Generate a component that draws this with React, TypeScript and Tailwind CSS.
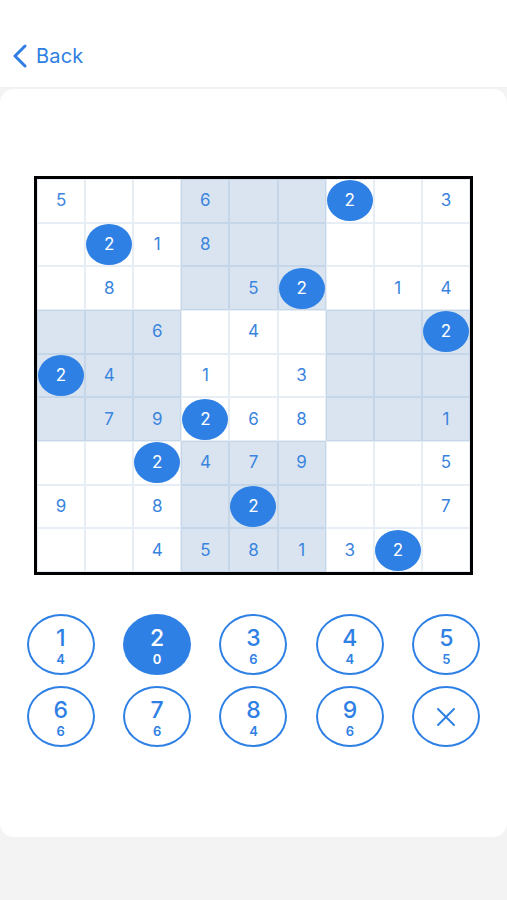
import React from "react";

const BOARD: (number | null)[][] = [
  [5, null, null, 6, null, null, 2, null, 3],
  [null, 2, 1, 8, null, null, null, null, null],
  [null, 8, null, null, 5, 2, null, 1, 4],
  [null, null, 6, null, 4, null, null, null, 2],
  [2, 4, null, 1, null, 3, null, null, null],
  [null, 7, 9, 2, 6, 8, null, null, 1],
  [null, null, 2, 4, 7, 9, null, null, 5],
  [9, null, 8, null, 2, null, null, null, 7],
  [null, null, 4, 5, 8, 1, 3, 2, null],
];

function shaded(r: number, c: number) {
  const br = Math.floor(r / 3);
  const bc = Math.floor(c / 3);
  return (br + bc) % 2 === 1;
}

const PAD: { d: string; n?: string; active?: boolean }[] = [
  { d: "1", n: "4" },
  { d: "2", n: "0", active: true },
  { d: "3", n: "6" },
  { d: "4", n: "4" },
  { d: "5", n: "5" },
  { d: "6", n: "6" },
  { d: "7", n: "6" },
  { d: "8", n: "4" },
  { d: "9", n: "6" },
  { d: "x" },
];

export default function App() {
  return (
    <div
      className="w-[507px] h-[900px] bg-[#f3f3f3] flex flex-col overflow-hidden"
      style={{ fontFamily: "Inter, 'Open Sans', sans-serif" }}
    >
      <div className="h-[88px] bg-white flex items-center pl-[12px] pt-[24px] border-b border-[#f0f0f0]">
        <div className="flex items-center gap-[8px] text-[#2f7fe3]">
          <svg width="16" height="24" viewBox="0 0 16 24" fill="none">
            <path d="M13 2 L3 12 L13 22" stroke="#2f7fe3" strokeWidth="3" strokeLinecap="round" strokeLinejoin="round" />
          </svg>
          <span className="text-[20px] leading-none tracking-[0.2px]">Back</span>
        </div>
      </div>
      <div className="mt-[1px] h-[748px] bg-white rounded-[14px] flex flex-col items-center pt-[87px]">
        <div className="w-[439px] h-[399px] border-[3px] border-black grid grid-cols-9 grid-rows-9">
          {BOARD.map((row, r) =>
            row.map((v, c) => {
              const s = shaded(r, c);
              return (
                <div
                  key={`${r}-${c}`}
                  className={`border flex items-center justify-center ${
                    s ? "bg-[#d9e4f0] border-[#c6d6e9]" : "bg-white border-[#e7edf4]"
                  }`}
                >
                  {v === 2 ? (
                    <div className="w-[46px] h-[41px] rounded-[50%] bg-[#2f80e4] flex items-center justify-center text-white text-[17px] leading-none">
                      2
                    </div>
                  ) : v !== null ? (
                    <span className="text-[#3a84de] text-[17px] leading-none">{v}</span>
                  ) : null}
                </div>
              );
            })
          )}
        </div>
        <div className="mt-[39px] w-[482px] grid grid-cols-5 gap-y-[11px] justify-items-center">
          {PAD.map((p) =>
            p.d === "x" ? (
              <div
                key="x"
                className="w-[68px] h-[61px] rounded-[50%] border-2 border-[#2f80e4] flex items-center justify-center"
              >
                <svg width="22" height="22" viewBox="0 0 22 22">
                  <path d="M3 3 L19 19 M19 3 L3 19" stroke="#2f80e4" strokeWidth="2" strokeLinecap="round" />
                </svg>
              </div>
            ) : (
              <div
                key={p.d}
                className={`w-[68px] h-[61px] rounded-[50%] flex flex-col items-center justify-center ${
                  p.active ? "bg-[#2f80e4] text-white" : "border-2 border-[#2f80e4] text-[#2f80e4]"
                }`}
              >
                <span className="text-[23px] leading-none mt-[4px] font-medium">{p.d}</span>
                <span className="text-[13px] leading-none mt-[3px] font-semibold">{p.n}</span>
              </div>
            )
          )}
        </div>
      </div>
    </div>
  );
}
